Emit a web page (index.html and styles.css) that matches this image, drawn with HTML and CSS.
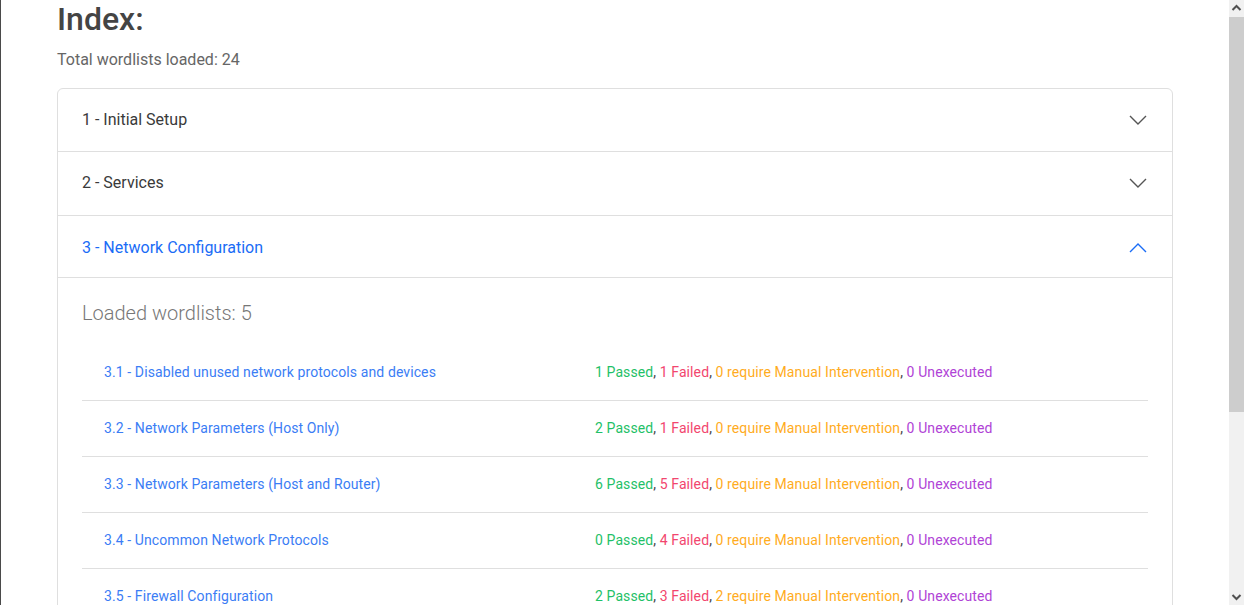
FILE: index.html
```html
<!DOCTYPE html>
<html lang="en">
<head>
<meta charset="utf-8">
<title>Index</title>
<link rel="stylesheet" href="styles.css">
</head>
<body>
<div class="page">
<div class="container">
  <h2 class="title">Index:</h2>
  <p class="total">Total wordlists loaded: 24</p>

  <div class="accordion">
    <div class="acc-item">
      <div class="acc-header">
        <span>1 - Initial Setup</span>
        <svg class="chev" width="18" height="10" viewBox="0 0 18 10"><path d="M1 1 L9 9 L17 1" fill="none" stroke="currentColor" stroke-width="1.4"/></svg>
      </div>
    </div>
    <div class="acc-item">
      <div class="acc-header">
        <span>2 - Services</span>
        <svg class="chev" width="18" height="10" viewBox="0 0 18 10"><path d="M1 1 L9 9 L17 1" fill="none" stroke="currentColor" stroke-width="1.4"/></svg>
      </div>
    </div>
    <div class="acc-item">
      <div class="acc-header open">
        <span>3 - Network Configuration</span>
        <svg class="chev" width="18" height="10" viewBox="0 0 18 10"><path d="M1 9 L9 1 L17 9" fill="none" stroke="currentColor" stroke-width="1.4"/></svg>
      </div>
      <div class="acc-body">
        <h4 class="loaded">Loaded wordlists: 5</h4>
        <div class="rows">
          <div class="row">
            <a class="link" href="#">3.1 - Disabled unused network protocols and devices</a>
            <div class="stats"><span class="pass">1 Passed</span>, <span class="fail">1 Failed</span>, <span class="manual">0 require Manual Intervention</span>, <span class="unexec">0 Unexecuted</span></div>
          </div>
          <div class="row">
            <a class="link" href="#">3.2 - Network Parameters (Host Only)</a>
            <div class="stats"><span class="pass">2 Passed</span>, <span class="fail">1 Failed</span>, <span class="manual">0 require Manual Intervention</span>, <span class="unexec">0 Unexecuted</span></div>
          </div>
          <div class="row">
            <a class="link" href="#">3.3 - Network Parameters (Host and Router)</a>
            <div class="stats"><span class="pass">6 Passed</span>, <span class="fail">5 Failed</span>, <span class="manual">0 require Manual Intervention</span>, <span class="unexec">0 Unexecuted</span></div>
          </div>
          <div class="row">
            <a class="link" href="#">3.4 - Uncommon Network Protocols</a>
            <div class="stats"><span class="pass">0 Passed</span>, <span class="fail">4 Failed</span>, <span class="manual">0 require Manual Intervention</span>, <span class="unexec">0 Unexecuted</span></div>
          </div>
          <div class="row">
            <a class="link" href="#">3.5 - Firewall Configuration</a>
            <div class="stats"><span class="pass">2 Passed</span>, <span class="fail">3 Failed</span>, <span class="manual">2 require Manual Intervention</span>, <span class="unexec">0 Unexecuted</span></div>
          </div>
        </div>
      </div>
    </div>
  </div>
</div>
</div>
<div class="scrollbar">
  <div class="sb-btn">
    <svg width="15" height="17" viewBox="0 0 15 17"><path d="M3.5 10 L7.5 6 L11.5 10" fill="none" stroke="#505050" stroke-width="2"/></svg>
  </div>
  <div class="sb-thumb"></div>
  <div class="sb-track"></div>
  <div class="sb-btn">
    <svg width="15" height="17" viewBox="0 0 15 17"><path d="M3.5 7 L7.5 11 L11.5 7" fill="none" stroke="#505050" stroke-width="2"/></svg>
  </div>
</div>
</body>
</html>
```
FILE: styles.css
```css
html {
  border-left: 1px solid #4a4a4a;
  background: #fff;
  overflow: hidden;
}
body {
  margin: 0;
  height: 100vh;
  display: flex;
  overflow: hidden;
  font-family: Roboto, "Liberation Sans", sans-serif;
  color: #333;
  background: #fff;
}
.page {
  flex: 1;
  min-width: 0;
  overflow: hidden;
}
.scrollbar {
  width: 15px;
  flex: none;
  display: flex;
  flex-direction: column;
  background: #f1f1f1;
}
.sb-btn {
  height: 17px;
  flex: none;
}
.sb-btn svg {
  display: block;
}
.sb-thumb {
  height: 395px;
  flex: none;
  background: #cdcdcd;
}
.sb-track {
  flex: 1;
}
.container {
  max-width: 1140px;
  margin: 0 auto;
  padding: 0 12px 60px;
  box-sizing: border-box;
}
.title {
  margin: 0 0 10px;
  font-size: 32px;
  line-height: 38px;
  font-weight: 500;
  color: #444;
}
.total {
  margin: 0 0 16px;
  font-size: 16px;
  line-height: 24px;
  color: #666;
}
.accordion {
  border: 1px solid #dfdfdf;
  border-radius: 6px;
  overflow: hidden;
}
.acc-item + .acc-item {
  border-top: 1px solid #dfdfdf;
}
.acc-header {
  display: flex;
  align-items: center;
  justify-content: space-between;
  padding: 19px 25px 19px 24px;
  font-size: 16px;
  line-height: 24px;
  color: #3a3a3a;
}
.acc-item:nth-child(2) .acc-header {
  padding-bottom: 20px;
}
.acc-header .chev {
  color: #555;
}
.acc-header.open {
  color: #1a6cf6;
  padding-top: 20px;
  padding-bottom: 17px;
  border-bottom: 1px solid #dfdfdf;
}
.acc-header.open .chev {
  color: #1a6cf6;
}
.acc-body {
  padding: 23px 24px 24px;
}
.loaded {
  margin: 0 0 20px;
  font-size: 20px;
  line-height: 24px;
  font-weight: 300;
  color: #777;
}
.row {
  display: grid;
  grid-template-columns: 491px 1fr;
  padding: 18px 22px;
  font-size: 14px;
  line-height: 19px;
  letter-spacing: 0.1px;
  border-bottom: 1px solid #dfdfdf;
}
.row:last-child {
  border-bottom: 0;
}
.link {
  color: #3b7df5;
  text-decoration: none;
}
.stats {
  color: #444;
}
.pass { color: #1fc168; }
.fail { color: #f2466e; }
.manual { color: #ffac1e; }
.unexec { color: #b043d6; }
```
